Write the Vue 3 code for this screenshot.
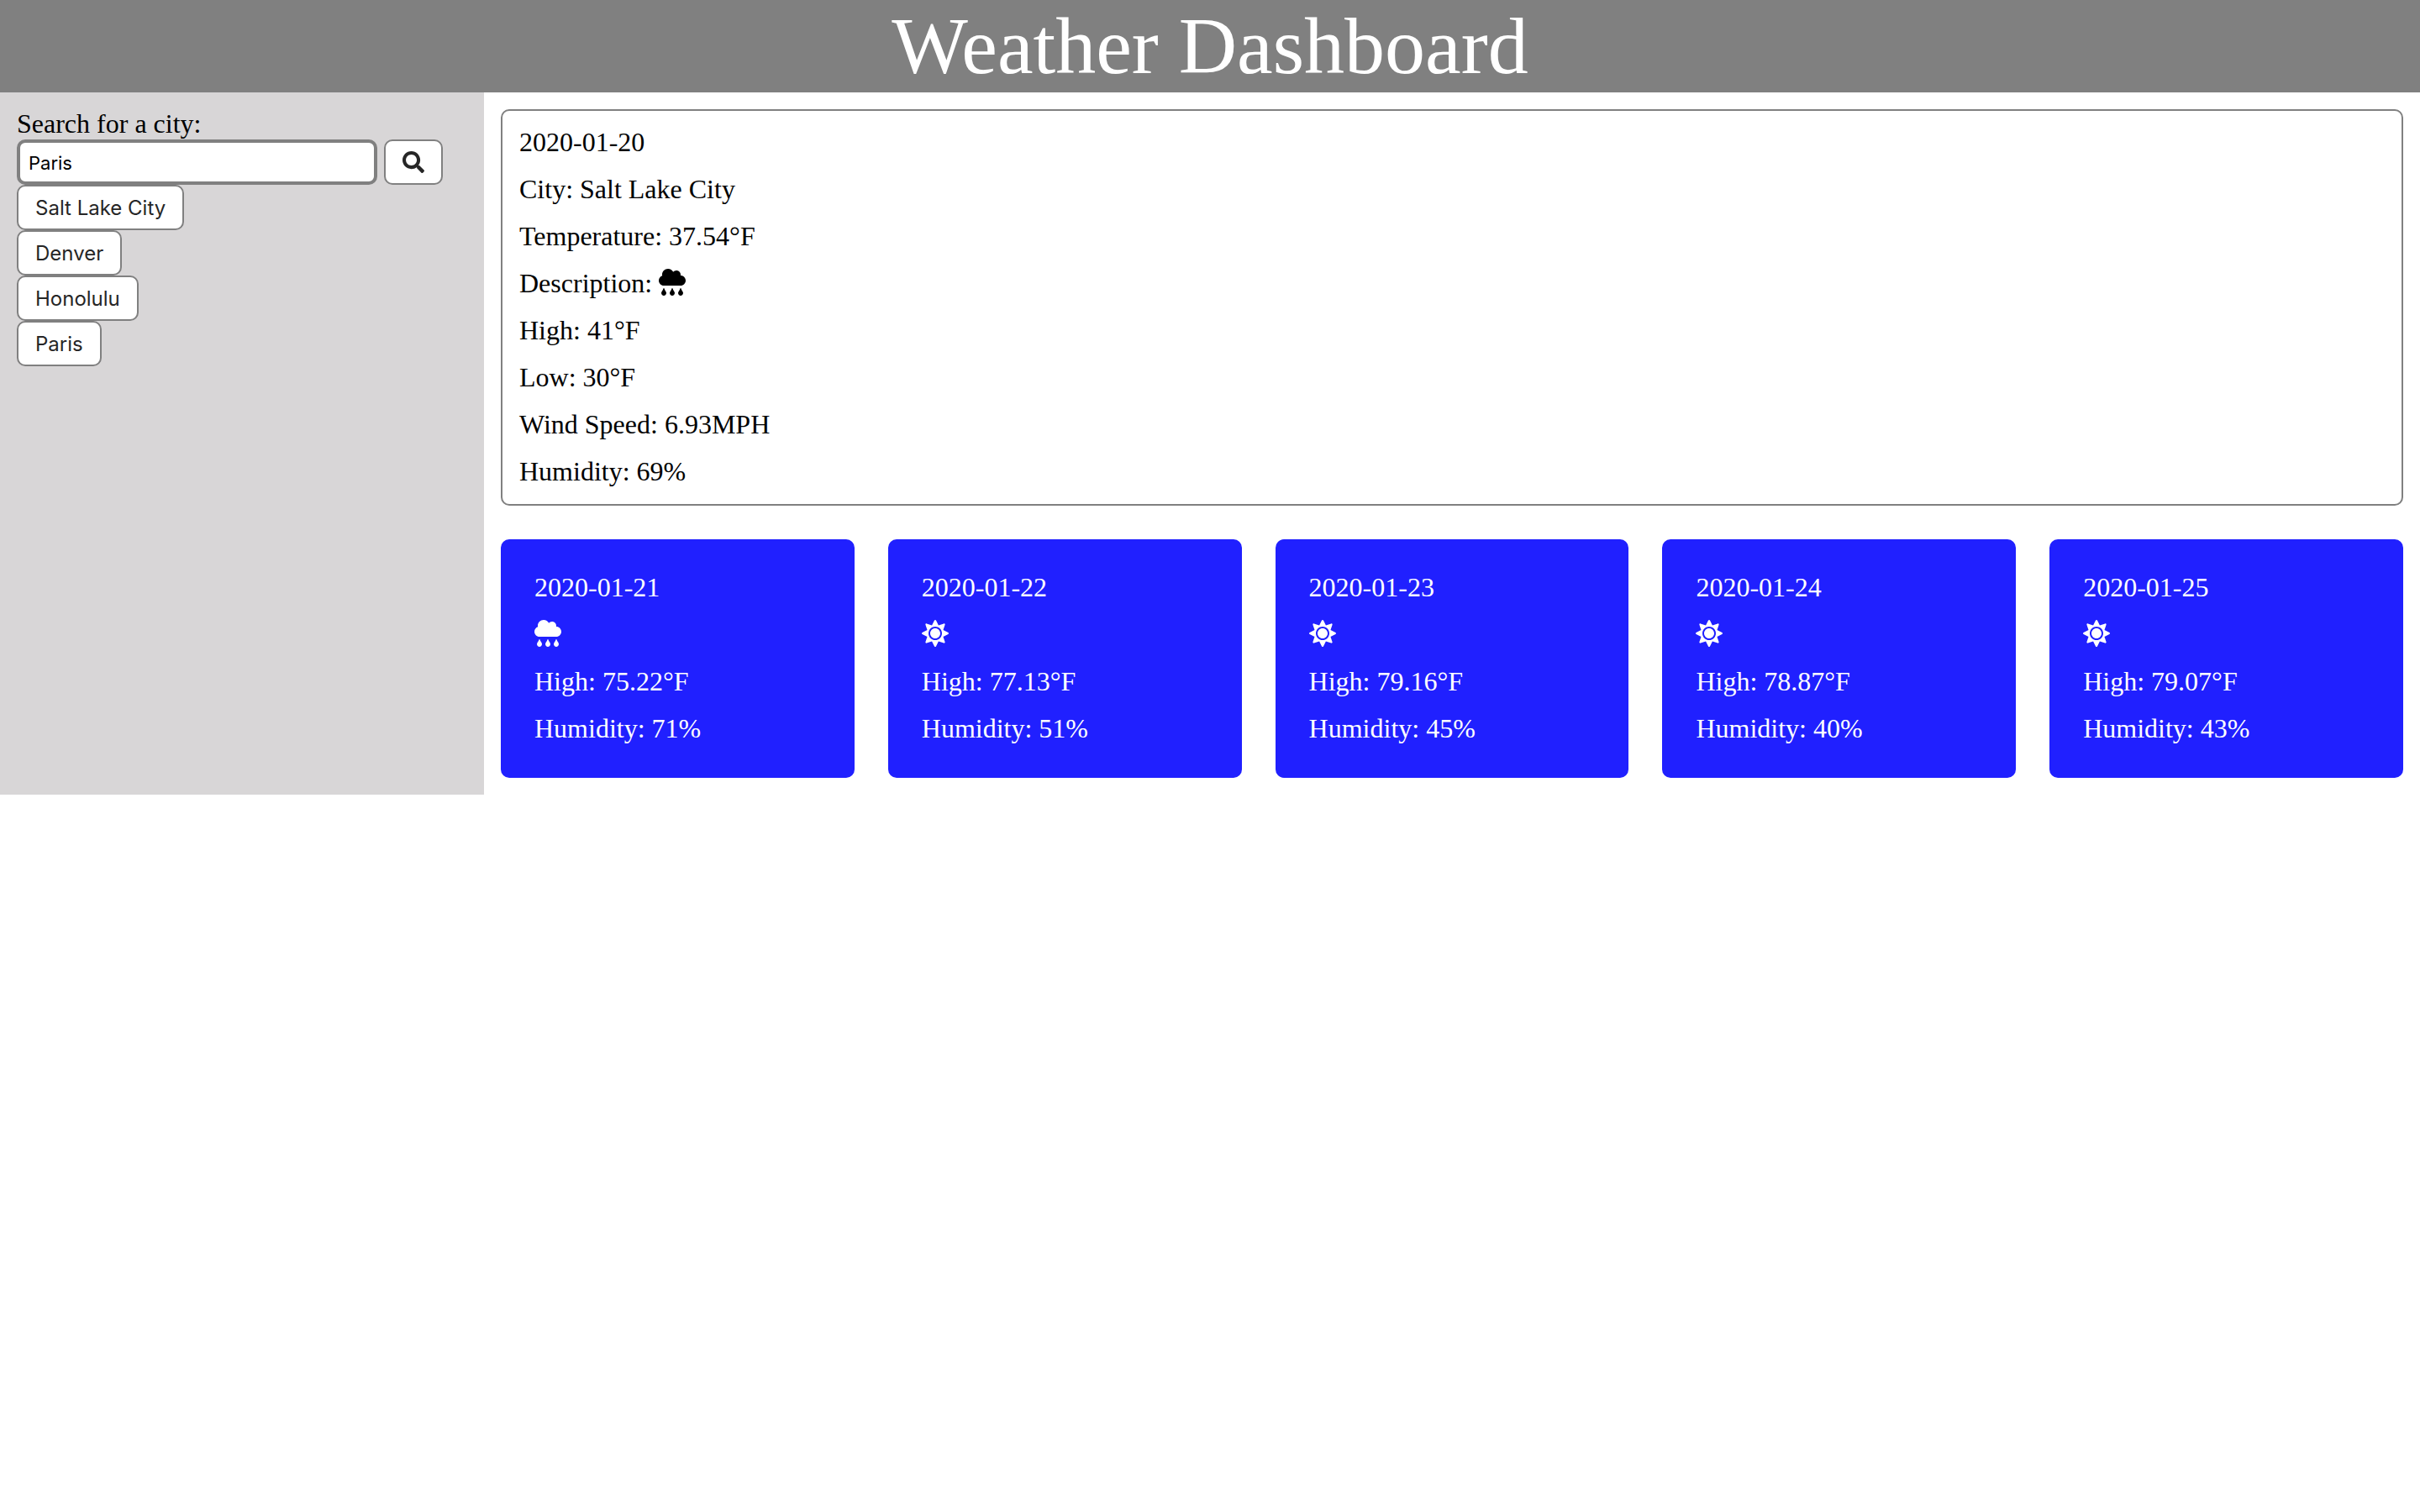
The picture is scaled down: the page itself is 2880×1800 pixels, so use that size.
<script setup>
import { ref } from 'vue'

const icons = {
  rain: 'M416 128c-.6 0-1.1.2-1.6.2 1.1-5.2 1.6-10.6 1.6-16.2 0-44.2-35.8-80-80-80-24.6 0-46.3 11.3-61 28.8C256.4 24.8 219.3 0 176 0 114.1 0 64 50.1 64 112c0 7.3.8 14.3 2.1 21.2C27.8 145.8 0 181.5 0 224c0 53 43 96 96 96h320c53 0 96-43 96-96s-43-96-96-96zM88 374.2c-12.8 44.4-40 56.4-40 87.7 0 27.7 21.5 50.1 48 50.1s48-22.4 48-50.1c0-31.4-27.2-43.1-40-87.7-2.2-8.1-13.5-8.5-16 0zm160 0c-12.8 44.4-40 56.4-40 87.7 0 27.7 21.5 50.1 48 50.1s48-22.4 48-50.1c0-31.4-27.2-43.1-40-87.7-2.2-8.1-13.5-8.5-16 0zm160 0c-12.8 44.4-40 56.4-40 87.7 0 27.7 21.5 50.1 48 50.1s48-22.4 48-50.1c0-31.4-27.2-43.1-40-87.7-2.2-8.1-13.5-8.5-16 0z',
  sun: 'M256 160c-52.9 0-96 43.1-96 96s43.1 96 96 96 96-43.1 96-96-43.1-96-96-96zm246.4 80.5l-94.7-47.3 33.5-100.4c4.5-13.6-8.4-26.5-21.9-21.9l-100.4 33.5-47.4-94.8c-6.4-12.8-24.6-12.8-31 0l-47.3 94.7L92.7 70.8c-13.6-4.5-26.5 8.4-21.9 21.9l33.5 100.4-94.7 47.4c-12.8 6.4-12.8 24.6 0 31l94.7 47.3-33.5 100.5c-4.5 13.6 8.4 26.5 21.9 21.9l100.4-33.5 47.3 94.7c6.4 12.8 24.6 12.8 31 0l47.3-94.7 100.4 33.5c13.6 4.5 26.5-8.4 21.9-21.9l-33.5-100.4 94.7-47.3c13-6.5 13-24.7.2-31.1zm-155.9 106c-49.9 49.9-131.1 49.9-181 0-49.9-49.9-49.9-131.1 0-181 49.9-49.9 131.1-49.9 181 0 49.9 49.9 49.9 131.1 0 181z',
}

const query = ref('Paris')
const city = ref('Salt Lake City')
const history = ref(['Salt Lake City', 'Denver', 'Honolulu', 'Paris'])

const forecast = [
  { date: '2020-01-21', icon: 'rain', label: 'Rain', high: '75.22', humidity: 71 },
  { date: '2020-01-22', icon: 'sun', label: 'Clear', high: '77.13', humidity: 51 },
  { date: '2020-01-23', icon: 'sun', label: 'Clear', high: '79.16', humidity: 45 },
  { date: '2020-01-24', icon: 'sun', label: 'Clear', high: '78.87', humidity: 40 },
  { date: '2020-01-25', icon: 'sun', label: 'Clear', high: '79.07', humidity: 43 },
]

function search() {
  const name = query.value.trim()
  if (!name) return
  city.value = name
  if (!history.value.includes(name)) history.value.push(name)
}
</script>

<template>
  <div class="dashboard">
    <header class="header">
      <h1>Weather Dashboard</h1>
    </header>
    <div class="layout">
      <aside class="sidebar">
        <form @submit.prevent="search">
          <label for="city">Search for a city:</label>
          <div class="search-row">
            <input id="city" v-model="query" type="text" autocomplete="off" />
            <button class="btn" type="submit" aria-label="Search">
              <svg class="search-icon" viewBox="0 0 512 512" aria-hidden="true">
                <path d="M505 442.7L405.3 343c-4.5-4.5-10.6-7-17-7H372c27.6-35.3 44-79.7 44-128C416 93.1 322.9 0 208 0S0 93.1 0 208s93.1 208 208 208c48.3 0 92.7-16.4 128-44v16.3c0 6.4 2.5 12.5 7 17l99.7 99.7c9.4 9.4 24.6 9.4 33.9 0l28.3-28.3c9.4-9.4 9.4-24.6.1-34zM208 336c-70.7 0-128-57.2-128-128 0-70.7 57.2-128 128-128 70.7 0 128 57.2 128 128 0 70.7-57.2 128-128 128z" />
              </svg>
            </button>
          </div>
        </form>
        <div class="history">
          <button v-for="name in history" :key="name" class="btn" type="button" @click="city = name">{{ name }}</button>
        </div>
      </aside>
      <main class="content">
        <section class="current">
          <p>2020-01-20</p>
          <p>City: {{ city }}</p>
          <p>Temperature: 37.54°F</p>
          <p>
            Description:
            <svg class="icon" viewBox="0 0 512 512" role="img" aria-label="Rain"><path :d="icons.rain" /></svg>
          </p>
          <p>High: 41°F</p>
          <p>Low: 30°F</p>
          <p>Wind Speed: 6.93MPH</p>
          <p>Humidity: 69%</p>
        </section>
        <section class="forecast">
          <article v-for="day in forecast" :key="day.date" class="card">
            <p>{{ day.date }}</p>
            <p>
              <svg class="icon" viewBox="0 0 512 512" role="img" :aria-label="day.label"><path :d="icons[day.icon]" /></svg>
            </p>
            <p>High: {{ day.high }}°F</p>
            <p>Humidity: {{ day.humidity }}%</p>
          </article>
        </section>
      </main>
    </div>
  </div>
</template>

<style>
body {
  margin: 0;
  background: #fff;
}
</style>

<style scoped>
* {
  box-sizing: border-box;
}

.dashboard {
  font-family: "Liberation Serif", "Times New Roman", serif;
  font-size: 32px;
  line-height: 34px;
  color: #000;
}

.header {
  background: #808080;
  color: #fff;
  text-align: center;
}

h1 {
  margin: 0;
  font-size: 96px;
  font-weight: 400;
  line-height: 110px;
}

.layout {
  display: flex;
}

.sidebar {
  width: 20%;
  padding: 20px;
  background: #d8d6d7;
}

label {
  display: block;
  padding-bottom: 2px;
}

.search-row {
  display: flex;
  gap: 8px;
}

input {
  width: 80%;
  height: 54px;
  padding: 2px 10px 0;
  border: 4px solid #808080;
  border-radius: 10px;
  background: #fff;
  color: #000;
  font-family: Inter, sans-serif;
  font-size: 22px;
  outline: none;
}

.btn {
  height: 54px;
  padding: 0 20px;
  border: 2px solid #808080;
  border-radius: 10px;
  background: #fff;
  color: #262626;
  font-family: Inter, sans-serif;
  font-size: 24px;
}

.search-icon {
  display: block;
  width: 26px;
  height: 26px;
  fill: currentColor;
}

.history {
  display: flex;
  flex-direction: column;
  align-items: flex-start;
}

.content {
  flex: 1;
  display: flex;
  flex-direction: column;
  gap: 40px;
  padding: 20px;
}

p {
  margin: 0;
  padding-bottom: 2px;
}

.current,
.card {
  display: flex;
  flex-direction: column;
  gap: 20px;
  border-radius: 10px;
}

.current {
  padding: 20px;
  border: 2px solid #808080;
}

.forecast {
  display: grid;
  grid-template-columns: repeat(5, 1fr);
  gap: 40px;
}

.card {
  padding: 40px;
  background: #2020ff;
  color: #fff;
}

.icon {
  width: 32px;
  height: 32px;
  vertical-align: -4px;
  fill: currentColor;
}
</style>
